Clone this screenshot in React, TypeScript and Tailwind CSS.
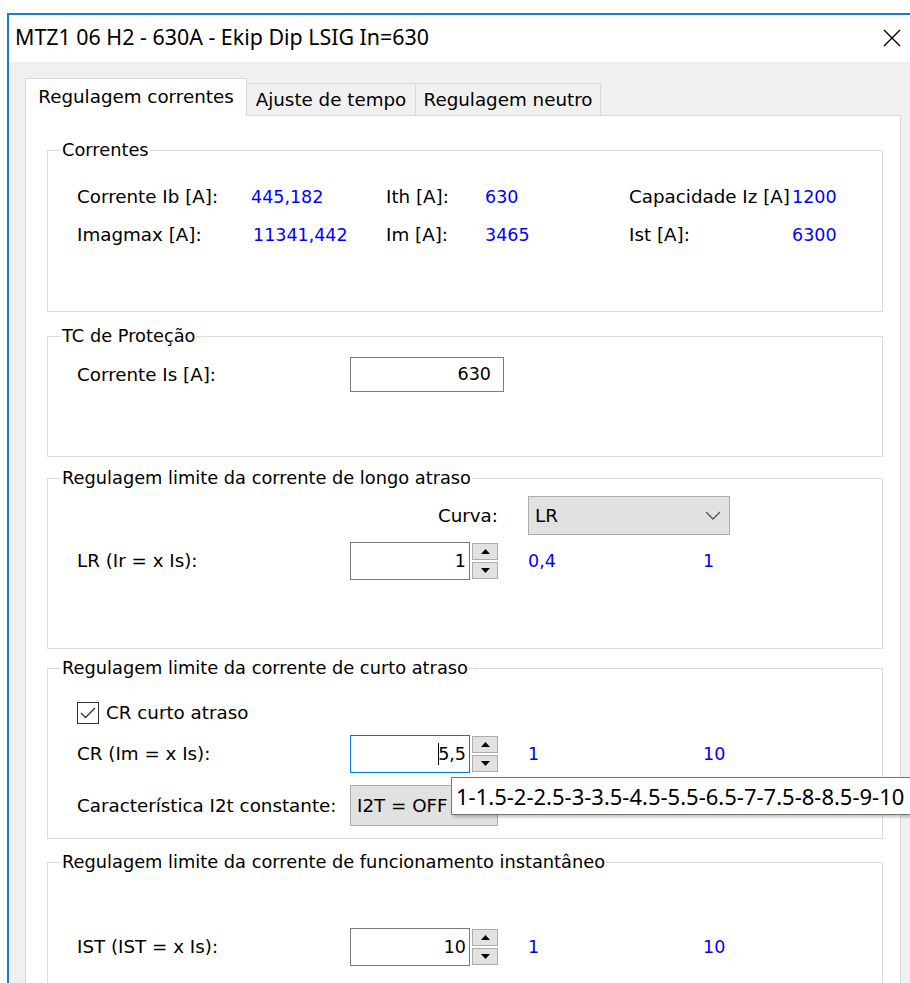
import type { ReactNode } from "react";

const blue = "text-[17.5px] text-[#0000ff]";

function Group({
  title,
  className,
  children,
}: {
  title: string;
  className: string;
  children?: ReactNode;
}) {
  return (
    <div className={`relative w-[836px] border border-[#dcdcdc] pl-[29px] ${className}`}>
      <span className="absolute left-[13px] top-[-12px] bg-white px-[1px] text-[17.8px] leading-[22px] whitespace-nowrap">
        {title}
      </span>
      {children}
    </div>
  );
}

function Spinner() {
  return (
    <div className="ml-[2px] flex h-[38px] w-[26px] flex-col justify-between py-[1px]">
      <div className="flex h-[17px] items-center justify-center border border-[#adadad] bg-[#e1e1e1]">
        <svg width="9" height="5" viewBox="0 0 9 5">
          <path d="M0 5 L4.5 0 L9 5 Z" fill="#000" />
        </svg>
      </div>
      <div className="flex h-[17px] items-center justify-center border border-[#adadad] bg-[#e1e1e1]">
        <svg width="9" height="5" viewBox="0 0 9 5">
          <path d="M0 0 L9 0 L4.5 5 Z" fill="#000" />
        </svg>
      </div>
    </div>
  );
}

function NumericRow({
  label,
  value,
  min,
  max,
  focused,
}: {
  label: string;
  value: string;
  min: string;
  max: string;
  focused?: boolean;
}) {
  return (
    <div className="flex h-[38px] items-center">
      <div className="w-[273px] whitespace-nowrap">{label}</div>
      <div
        className={`flex h-[38px] w-[120px] items-center justify-end border pr-[3px] text-[17.5px] ${
          focused ? "border-[#0078d7]" : "border-[#7a7a7a]"
        }`}
      >
        {focused && <span className="-mr-[1px] h-[22px] w-[1px] bg-black" />}
        {value}
      </div>
      <Spinner />
      <div className={`ml-[30px] w-[175px] ${blue}`}>{min}</div>
      <div className={blue}>{max}</div>
    </div>
  );
}

function Chevron() {
  return (
    <svg width="16" height="9" viewBox="0 0 16 9">
      <path d="M1 1 L8 8 L15 1" fill="none" stroke="#555" strokeWidth="1.3" />
    </svg>
  );
}

export default function App() {
  return (
    <div className="h-[983px] w-[910px] overflow-hidden bg-white pl-[7px] pt-[13px] font-['DejaVu_Sans',sans-serif] text-[18.3px] text-black">
      <div className="flex h-[970px] w-[903px] flex-col border-l-2 border-t-2 border-[#1a7bd0]">
        {/* title bar */}
        <div className="flex h-[47px] shrink-0 items-center justify-between pb-[2px] pl-[6px] pr-[9px] font-['Noto_Sans',sans-serif] text-[21.4px]">
          <span>MTZ1 06 H2 - 630A - Ekip Dip LSIG In=630</span>
          <svg width="18" height="18" viewBox="0 0 18 18">
            <path d="M1 1 L17 17 M17 1 L1 17" stroke="#000" strokeWidth="1.4" />
          </svg>
        </div>

        {/* client area */}
        <div className="flex-1 bg-[#f0f0f0] pl-[16px] pt-[16px]">
          <div className="relative z-10 -mb-[1px] flex h-[38px] items-end">
            <div className="flex h-[38px] w-[222px] items-center justify-center border border-b-0 border-[#d9d9d9] bg-white pb-[2px]">
              Regulagem correntes
            </div>
            <div className="mb-[1px] flex h-[32px] w-[169px] items-center justify-center border border-b-0 border-l-0 border-[#d9d9d9]">
              Ajuste de tempo
            </div>
            <div className="mb-[1px] flex h-[32px] w-[185px] items-center justify-center border border-b-0 border-l-0 border-[#d9d9d9]">
              Regulagem neutro
            </div>
          </div>

          <div className="h-[900px] w-[876px] border border-[#d9d9d9] bg-white pl-[21px]">
            <Group title="Correntes" className="mt-[34px] h-[162px] pt-[35px]">
              <div className="grid grid-cols-[174px_135px_99px_144px_163px_41px] gap-y-[16px] whitespace-nowrap leading-[22px]">
                <span>Corrente Ib [A]:</span>
                <span className={blue}>445,182</span>
                <span>Ith [A]:</span>
                <span className={blue}>630</span>
                <span>Capacidade Iz [A]</span>
                <span className={`text-right ${blue}`}>1200</span>
                <span>Imagmax [A]:</span>
                <span className={`pl-[2px] ${blue}`}>11341,442</span>
                <span>Im [A]:</span>
                <span className={blue}>3465</span>
                <span>Ist [A]:</span>
                <span className={`text-right ${blue}`}>6300</span>
              </div>
            </Group>

            <Group title="TC de Proteção" className="mt-[24px] h-[121px] pt-[20px]">
              <div className="flex items-center">
                <div className="w-[273px]">Corrente Is [A]:</div>
                <div className="flex h-[35px] w-[154px] items-center justify-end border border-[#7a7a7a] pr-[12px] text-[17.5px]">
                  630
                </div>
              </div>
            </Group>

            <Group
              title="Regulagem limite da corrente de longo atraso"
              className="mt-[21px] h-[171px] pt-[17px]"
            >
              <div className="flex h-[39px] items-center">
                <div className="w-[451px] pr-[30px] text-right">Curva:</div>
                <div className="flex h-[39px] w-[202px] items-center justify-between border border-[#adadad] bg-[#e1e1e1] pl-[6px] pr-[8px]">
                  <span>LR</span>
                  <Chevron />
                </div>
              </div>
              <div className="mt-[7px]">
                <NumericRow label="LR (Ir = x Is):" value="1" min="0,4" max="1" />
              </div>
            </Group>

            <Group
              title="Regulagem limite da corrente de curto atraso"
              className="mt-[19px] h-[171px] pt-[32px]"
            >
              <div className="flex h-[23px] items-center">
                <div className="flex h-[22px] w-[22px] items-center justify-center border border-[#333]">
                  <svg width="16" height="12" viewBox="0 0 16 12">
                    <path d="M1 6 L5.5 10.5 L15 1" fill="none" stroke="#333" strokeWidth="1.3" />
                  </svg>
                </div>
                <span className="ml-[7px]">CR curto atraso</span>
              </div>
              <div className="mt-[11px]">
                <NumericRow label="CR (Im = x Is):" value="5,5" min="1" max="10" focused />
              </div>
              <div className="mt-[12px] flex items-center">
                <div className="w-[273px] whitespace-nowrap">Característica I2t constante:</div>
                <div className="flex h-[41px] w-[148px] items-center border border-[#adadad] bg-[#e1e1e1] pl-[6px]">
                  I2T = OFF
                </div>
              </div>

              {/* tooltip listing the allowed steps */}
              <div className="absolute left-[403px] top-[108px] z-20 flex h-[38px] w-[480px] items-center border border-[#767676] bg-white pl-[4px] font-['Noto_Sans',sans-serif] text-[22px] whitespace-nowrap shadow-[2px_2px_3px_rgba(0,0,0,0.25)]">
                1-1.5-2-2.5-3-3.5-4.5-5.5-6.5-7-7.5-8-8.5-9-10
              </div>
            </Group>

            <Group
              title="Regulagem limite da corrente de funcionamento instantâneo"
              className="mt-[23px] h-[200px] pt-[65px]"
            >
              <NumericRow label="IST (IST = x Is):" value="10" min="1" max="10" />
            </Group>
          </div>
        </div>
      </div>
    </div>
  );
}
